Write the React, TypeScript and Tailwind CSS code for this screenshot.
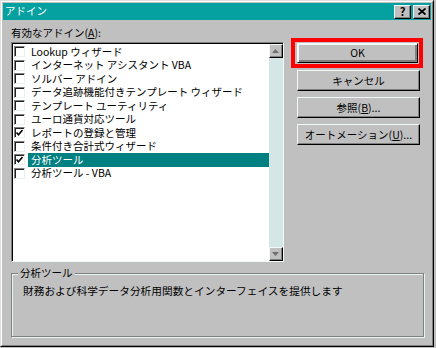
const items = [
  { label: "Lookup ウィザード", checked: false },
  { label: "インターネット アシスタント VBA", checked: false },
  { label: "ソルバー アドイン", checked: false },
  { label: "データ追跡機能付きテンプレート ウィザード", checked: false },
  { label: "テンプレート ユーティリティ", checked: false },
  { label: "ユーロ通貨対応ツール", checked: false },
  { label: "レポートの登録と管理", checked: true },
  { label: "条件付き合計式ウィザード", checked: false },
  { label: "分析ツール", checked: true, selected: true },
  { label: "分析ツール - VBA", checked: false },
];

function CheckBox({ checked }: { checked: boolean }) {
  return (
    <span className="flex h-[11px] w-[11px] shrink-0 items-center justify-center border border-t-[#808080] border-l-[#808080] border-r-[#e8f0f0] border-b-[#e8f0f0] bg-white shadow-[inset_1px_1px_#202020]">
      {checked && (
        <svg width="9" height="9" viewBox="0 0 9 9">
          <path d="M1.5 4.5 L3.5 6.8 L7.5 2" fill="none" stroke="#000" strokeWidth="1.6" />
        </svg>
      )}
    </span>
  );
}

function Win95Button({ children, className = "" }: { children: React.ReactNode; className?: string }) {
  return (
    <button
      className={`flex items-center justify-center border border-t-[#f0f8f8] border-l-[#f0f8f8] border-r-black border-b-black bg-[#c0c0c0] text-[10.5px] text-black shadow-[inset_-1px_-1px_#808080] ${className}`}
    >
      {children}
    </button>
  );
}

function ScrollArrow({ up }: { up?: boolean }) {
  return (
    <div className="flex h-[14px] w-[14px] items-center justify-center border border-t-[#f0f8f8] border-l-[#f0f8f8] border-r-black border-b-black bg-[#c0c0c0] shadow-[inset_-1px_-1px_#808080]">
      <svg width="7" height="4" viewBox="0 0 7 4">
        <path d={up ? "M3.5 0 L7 4 L0 4 Z" : "M0 0 L7 0 L3.5 4 Z"} fill="#707070" />
      </svg>
    </div>
  );
}

export default function App() {
  return (
    <div className="h-[348px] w-[436px] bg-[#c0c0c0] font-['Noto_Sans_CJK_JP',sans-serif]">
      <div className="h-[347px] w-[434px] border border-t-[#dfdfdf] border-l-[#dfdfdf] border-r-black border-b-black">
        <div className="h-full border border-t-white border-l-white border-r-[#808080] border-b-[#808080] p-[1px]">
          {/* title bar */}
          <div className="flex h-[17px] items-center bg-[#05a0a0] pl-[2px] pr-[1px]">
            <span className="flex-1 text-[10.5px] leading-none text-white">アドイン</span>
            <div className="flex gap-[2px]">
              <Win95Button className="h-[14px] w-[17px] !text-[11px] font-bold leading-none">?</Win95Button>
              <Win95Button className="h-[14px] w-[17px] leading-none">
                <svg width="8" height="7" viewBox="0 0 8 7">
                  <path d="M0.5 0.5 L7.5 6.5 M7.5 0.5 L0.5 6.5" stroke="#000" strokeWidth="1.8" />
                </svg>
              </Win95Button>
            </div>
          </div>

          {/* body */}
          <div className="px-[8px] pt-[6px]">
            <div className="flex">
              <div className="w-[277px]">
                <div className="h-[13px] text-[10.5px] leading-[13px] text-black">
                  有効なアドイン(<span className="underline">A</span>):
                </div>
                <div className="mt-[3px] flex h-[220px] border border-t-[#808080] border-l-[#808080] border-r-[#f0f8f8] border-b-[#f0f8f8] bg-white shadow-[inset_1px_1px_#000]">
                  <div className="flex-1 pl-[2px] pt-[2px]">
                    {items.map((it) => (
                      <div key={it.label} className="flex h-[13.5px] items-center">
                        <CheckBox checked={it.checked} />
                        <span
                          className={`ml-[3px] flex h-full flex-1 items-center whitespace-nowrap pl-[3px] text-[10.5px] leading-none ${
                            it.selected ? "bg-[#008080] text-white" : "text-black"
                          }`}
                        >
                          {it.label}
                        </span>
                      </div>
                    ))}
                  </div>
                  <div className="mt-[1px] flex w-[14px] flex-col justify-between bg-[#d5e6e6]">
                    <ScrollArrow up />
                    <ScrollArrow />
                  </div>
                </div>
              </div>

              <div className="ml-[7px] mt-[12px] flex w-[134px] flex-col">
                <div className="h-[30px] border-4 border-[#ff0000] py-[1px] pl-[2px] pr-[1px]">
                  <Win95Button className="h-full w-full border-black shadow-[inset_1px_1px_#f0f8f8,inset_-2px_-2px_#808080]">
                    OK
                  </Win95Button>
                </div>
                <Win95Button className="ml-[6px] mt-[2px] h-[21px] w-[123px]">キャンセル</Win95Button>
                <Win95Button className="ml-[6px] mt-[6px] h-[21px] w-[123px]">
                  参照(<span className="underline">B</span>)...
                </Win95Button>
                <Win95Button className="ml-[6px] mt-[6px] h-[21px] w-[123px]">
                  オートメーション(<span className="underline">U</span>)...
                </Win95Button>
              </div>
            </div>

            {/* group box */}
            <div className="relative mt-[11px] h-[64px] w-[413px] border border-[#808080] shadow-[inset_1px_1px_#e8f4f4,1px_1px_#e8f4f4]">
              <span className="absolute -top-[8px] left-[6px] bg-[#c0c0c0] px-[2px] text-[10.5px] leading-[14px] text-black">
                分析ツール
              </span>
              <div className="pl-[11px] pt-[10px] text-[10.7px] leading-[14px] text-black">
                財務および科学データ分析用関数とインターフェイスを提供します
              </div>
            </div>
          </div>
        </div>
      </div>
    </div>
  );
}
